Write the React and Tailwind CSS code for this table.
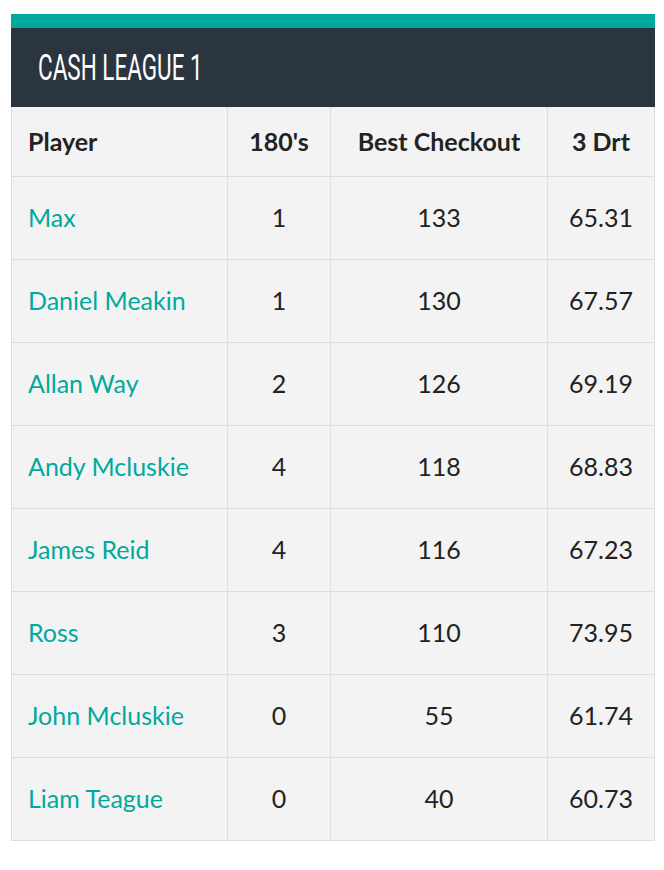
const PLAYERS = [
  {name: 'Max', s180: 1, checkout: 133, avg: '65.31'},
  {name: 'Daniel Meakin', s180: 1, checkout: 130, avg: '67.57'},
  {name: 'Allan Way', s180: 2, checkout: 126, avg: '69.19'},
  {name: 'Andy Mcluskie', s180: 4, checkout: 118, avg: '68.83'},
  {name: 'James Reid', s180: 4, checkout: 116, avg: '67.23'},
  {name: 'Ross', s180: 3, checkout: 110, avg: '73.95'},
  {name: 'John Mcluskie', s180: 0, checkout: 55, avg: '61.74'},
  {name: 'Liam Teague', s180: 0, checkout: 40, avg: '60.73'},
];

export default function App() {
  return (
    <div className="min-h-screen w-full bg-white pl-[11px] pr-[9px] pt-[14px] font-['Lato','Noto_Sans',sans-serif]">
      <div className="border-t-[14px] border-[#00a99d] bg-[#2b353f] px-[27px] h-[93px] flex items-center">
        <h2 className="text-[36px] leading-none text-white font-['Roboto',sans-serif] origin-left scale-x-[0.625] whitespace-nowrap">
          CASH LEAGUE 1
        </h2>
      </div>
      <table className="w-full border-collapse table-fixed bg-[#f3f3f3] text-[25px] text-[#222]">
        <colgroup>
          <col className="w-[216px]" />
          <col className="w-[103px]" />
          <col className="w-[217px]" />
          <col />
        </colgroup>
        <thead>
          <tr className="h-[69px]">
            <th className="border border-[#dedede] border-t-0 pl-[16px] text-left font-bold">Player</th>
            <th className="border border-[#dedede] border-t-0 text-center font-bold">180's</th>
            <th className="border border-[#dedede] border-t-0 text-center font-bold">Best Checkout</th>
            <th className="border border-[#dedede] border-t-0 text-center font-bold">3 Drt</th>
          </tr>
        </thead>
        <tbody>
          {PLAYERS.map((p) => (
            <tr key={p.name} className="h-[83px]">
              <td className="border border-[#dedede] pl-[16px] text-[#00a99d]">{p.name}</td>
              <td className="border border-[#dedede] text-center">{p.s180}</td>
              <td className="border border-[#dedede] text-center">{p.checkout}</td>
              <td className="border border-[#dedede] text-center">{p.avg}</td>
            </tr>
          ))}
        </tbody>
      </table>
    </div>
  );
}
